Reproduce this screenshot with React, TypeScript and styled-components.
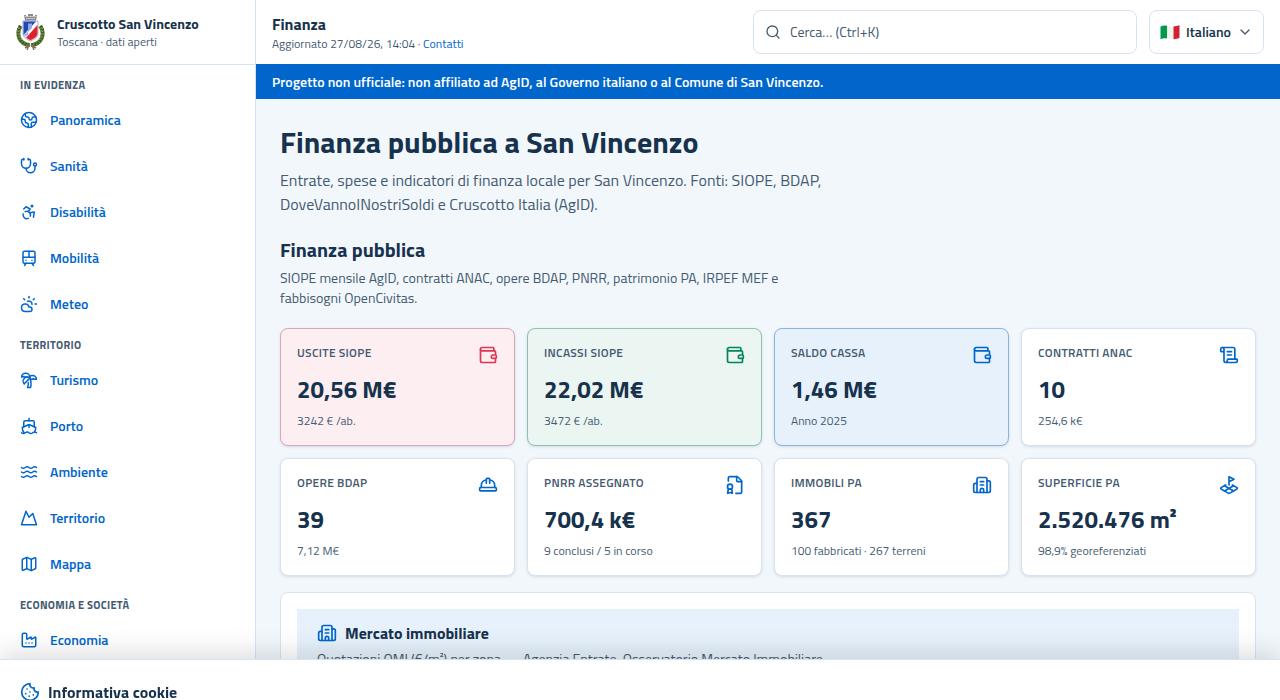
import React from "react";
import styled, { createGlobalStyle } from "styled-components";
import {
  Accessibility,
  Building2,
  ChevronDown,
  CloudSun,
  Cookie,
  Earth,
  Factory,
  FileBadge,
  HardHat,
  LandPlot,
  Map,
  Mountain,
  ScrollText,
  Search,
  Ship,
  Stethoscope,
  TramFront,
  TreePalm,
  Wallet,
  Waves,
  type LucideIcon,
} from "lucide-react";

const color = {
  primary: "#0066cc",
  ink: "#17324d",
  muted: "#455b71",
  line: "#d6e4f2",
  page: "#f2f7fc",
  soft: "#e6f1fb",
};

const GlobalStyle = createGlobalStyle`
  *, *::before, *::after { box-sizing: border-box; }
  html { scrollbar-width: none; }
  body {
    margin: 0;
    background: ${color.page};
    color: ${color.ink};
    font-family: "Titillium Web", Lato, Roboto, "Liberation Sans", sans-serif;
    font-size: 14px;
    line-height: 20px;
  }
  h1, h2, h3, p, ul { margin: 0; padding: 0; }
  a { color: ${color.primary}; text-decoration: none; }
  svg { flex: none; }
`;

const Shell = styled.div`
  display: grid;
  grid-template-columns: 256px minmax(0, 1fr);
  min-height: 100vh;
`;

const Sidebar = styled.aside`
  position: sticky;
  top: 0;
  height: 100vh;
  overflow: hidden;
  background: #fff;
  border-right: 1px solid ${color.line};
`;

const Brand = styled.div`
  display: flex;
  align-items: center;
  gap: 12px;
  height: 65px;
  padding: 0 16px;
  border-bottom: 1px solid ${color.line};
`;

const BrandName = styled.p`
  font-size: 14px;
  font-weight: 700;
  line-height: 20px;
`;

const Small = styled.p`
  font-size: 12px;
  line-height: 16px;
  color: ${color.muted};
`;

const Nav = styled.nav`
  display: flex;
  flex-direction: column;
  gap: 11px;
  padding: 12px 8px;
`;

const NavHeading = styled.h2`
  && { padding: 0 12px; margin-bottom: 4px; }
  font-size: 11px;
  font-weight: 700;
  line-height: 17px;
  letter-spacing: 0.025em;
  text-transform: uppercase;
  color: ${color.muted};
`;

const NavList = styled.ul`
  display: flex;
  flex-direction: column;
  gap: 2px;
  list-style: none;
`;

const NavLink = styled.a`
  display: flex;
  align-items: center;
  gap: 12px;
  height: 44px;
  padding: 0 12px;
  border-radius: 8px;
  font-weight: 600;
`;

const Header = styled.header`
  display: flex;
  align-items: center;
  gap: 12px;
  height: 64px;
  padding: 0 16px;
  background: #fff;
`;

const HeaderText = styled.div`
  flex: 1;
  min-width: 0;
`;

const HeaderTitle = styled.p`
  font-size: 16px;
  font-weight: 700;
  line-height: 24px;
`;

const Field = styled.label`
  display: flex;
  align-items: center;
  height: 44px;
  border: 1px solid ${color.line};
  border-radius: 8px;
  background: #fff;
  color: ${color.muted};
`;

const SearchField = styled(Field)`
  flex: 0 1 384px;
  gap: 9px;
  padding: 0 11px;
`;

const SearchInput = styled.input`
  flex: 1;
  min-width: 0;
  padding: 0;
  border: 0;
  outline: 0;
  background: transparent;
  font: inherit;
  color: ${color.ink};
  &::placeholder {
    color: ${color.muted};
    opacity: 1;
  }
`;

const LanguageField = styled(Field)`
  gap: 6px;
  padding: 0 10px;
`;

const Flag = styled.svg`
  width: 20px;
  height: 16px;
`;

const LanguageSelect = styled.select`
  appearance: none;
  padding: 0;
  border: 0;
  outline: 0;
  background: transparent;
  font: inherit;
  font-weight: 600;
  color: ${color.ink};
`;

const Notice = styled.p`
  && { padding: 8px 16px; }
  background: ${color.primary};
  color: #fff;
  font-weight: 600;
  line-height: 19px;
`;

const Main = styled.main`
  padding: 24px;
`;

const PageTitle = styled.h1`
  font-size: 30px;
  font-weight: 700;
  line-height: 38px;
`;

const Lead = styled.p`
  && { margin-top: 7px; }
  max-width: 672px;
  font-size: 16px;
  line-height: 24px;
  color: ${color.muted};
`;

const SectionHead = styled.div`
  margin: 20px 0;
`;

const SectionTitle = styled.h2`
  font-size: 20px;
  font-weight: 700;
  line-height: 28px;
`;

const SectionText = styled.p`
  && { margin-top: 4px; }
  max-width: 560px;
  color: ${color.muted};
`;

type Tone = "plain" | "red" | "green" | "blue";

const tones: Record<Tone, { bg: string; border: string; icon: string }> = {
  plain: { bg: "#ffffff", border: color.line, icon: color.primary },
  red: { bg: "#fceef1", border: "#dfa3b5", icon: "#de3552" },
  green: { bg: "#ebf5f1", border: "#8ac3ae", icon: "#008758" },
  blue: { bg: "#e6f1fc", border: "#85b5e6", icon: color.primary },
};

const CardGrid = styled.div`
  display: grid;
  grid-template-columns: repeat(4, minmax(0, 1fr));
  gap: 12px;
`;

const Card = styled.article<{ $tone: Tone }>`
  padding: 16px;
  border: 1px solid ${({ $tone }) => tones[$tone].border};
  border-radius: 8px;
  background: ${({ $tone }) => tones[$tone].bg};
  box-shadow: 0 1px 3px rgba(23, 50, 77, 0.14);
`;

const CardTop = styled.div<{ $tone: Tone }>`
  display: flex;
  justify-content: space-between;
  height: 20px;
  color: ${({ $tone }) => tones[$tone].icon};
`;

const CardLabel = styled.h3`
  font-size: 12px;
  font-weight: 600;
  line-height: 16px;
  letter-spacing: 0.025em;
  text-transform: uppercase;
  color: ${color.muted};
`;

const CardValue = styled.p`
  && { margin: 8px 0; }
  font-size: 24px;
  font-weight: 700;
  line-height: 32px;
`;

const Panel = styled.section`
  margin-top: 16px;
  padding: 16px;
  border: 1px solid ${color.line};
  border-radius: 8px;
  background: #fff;
`;

const PanelHead = styled.div`
  padding: 12px 20px;
  background: ${color.soft};
`;

const IconTitle = styled.h2`
  display: flex;
  align-items: center;
  gap: 8px;
  font-size: 16px;
  font-weight: 700;
  line-height: 24px;
  svg { color: ${color.primary}; }
`;

const CookieBar = styled.section`
  position: fixed;
  inset: auto 0 0;
  height: 41px;
  padding: 20px;
  background: #fff;
  border-top: 1px solid ${color.line};
  box-shadow: 0 -8px 24px rgba(0, 0, 0, 0.12);
`;

const navGroups: { title: string; items: [string, LucideIcon][] }[] = [
  {
    title: "In evidenza",
    items: [
      ["Panoramica", Earth],
      ["Sanità", Stethoscope],
      ["Disabilità", Accessibility],
      ["Mobilità", TramFront],
      ["Meteo", CloudSun],
    ],
  },
  {
    title: "Territorio",
    items: [
      ["Turismo", TreePalm],
      ["Porto", Ship],
      ["Ambiente", Waves],
      ["Territorio", Mountain],
      ["Mappa", Map],
    ],
  },
  { title: "Economia e società", items: [["Economia", Factory]] },
];

const cards: { label: string; value: string; note: string; icon: LucideIcon; tone: Tone }[] = [
  { label: "Uscite SIOPE", value: "20,56 M€", note: "3242 € /ab.", icon: Wallet, tone: "red" },
  { label: "Incassi SIOPE", value: "22,02 M€", note: "3472 € /ab.", icon: Wallet, tone: "green" },
  { label: "Saldo cassa", value: "1,46 M€", note: "Anno 2025", icon: Wallet, tone: "blue" },
  { label: "Contratti ANAC", value: "10", note: "254,6 k€", icon: ScrollText, tone: "plain" },
  { label: "Opere BDAP", value: "39", note: "7,12 M€", icon: HardHat, tone: "plain" },
  { label: "PNRR assegnato", value: "700,4 k€", note: "9 conclusi / 5 in corso", icon: FileBadge, tone: "plain" },
  { label: "Immobili PA", value: "367", note: "100 fabbricati · 267 terreni", icon: Building2, tone: "plain" },
  { label: "Superficie PA", value: "2.520.476 m²", note: "98,9% georeferenziati", icon: LandPlot, tone: "plain" },
];

function Crest() {
  return (
    <svg width="29" height="36" viewBox="0 0 29 36" role="img" aria-label="Stemma di San Vincenzo">
      {/* laurel and oak wreath */}
      <path d="M5 12C1.500 16 1.500 23 5 27c3 3 6 4 9 4" fill="none" stroke="#5c7d35" strokeWidth="4" />
      <path d="M24 12c3.500 4 3.500 11 0 15-3 3-6 4-9 4" fill="none" stroke="#5c7d35" strokeWidth="4" />
      <path d="M4 12C1 17 2 23 6 28c2 2 5 3 8 3M25 12c3 5 2 11-2 16-2 2-5 3-8 3" fill="none" stroke="#2f4f1c" strokeWidth="3" strokeDasharray="1 2" />
      <path d="M3 14c-1 5 0 9 3 12M26 14c1 5 0 9-3 12" fill="none" stroke="#a9b56c" strokeWidth="1" strokeDasharray="1 2" />
      {/* ribbon */}
      <path d="M14 31l-5 3M15 31l5 3M13 31l-2 5M16 31l2 5" stroke="#8a6f5c" strokeWidth="1.5" />
      {/* mural crown */}
      <path d="M8 1h2v1h2V0h5v2h2V1h2l-1 5.500H9z" fill="#8b8b8d" />
      <path d="M9 2.500h11M10 4.500h9" stroke="#c8c8ca" strokeWidth="1" />
      {/* shield */}
      <path d="M7 7h15v12c0 4-3 6-7.500 8C10 25 7 23 7 19z" fill="#fff" stroke="#6f7ba0" strokeWidth=".6" />
      <path d="M7.500 7.500H20L7.500 21z" fill="#2447b8" />
      <path d="M12 9.500h4V14l-4 4z" fill="#8fabe4" />
      <path d="M21.500 11v8c0 3.500-3 5.500-7 7.200-1.800-.7-3.200-1.400-4.500-2.400z" fill="#e2202c" />
      <path d="M8 21l4-4v4l-3 2z" fill="#9db5e6" />
    </svg>
  );
}

function ItalianFlag() {
  return (
    <Flag viewBox="0 0 20 16" aria-hidden="true">
      <path d="M.5 2.500C2.500 1.400 4.800 1.200 7 1.700V14.500C4.800 14 2.500 14.200.5 15.200z" fill="#009a49" />
      <path d="M7 1.700c2 .5 4 1 6.500.8v12.700c-2.500.2-4.500-.2-6.500-.7z" fill="#f1f1f1" />
      <path d="M13.500 2.500C15.500 2.400 17.500 2 19.500 1v12.800c-2 1-4 1.400-6 1.400z" fill="#d0222f" />
    </Flag>
  );
}

export default function App() {
  return (
    <>
      <GlobalStyle />
      <Shell>
        <Sidebar>
          <Brand>
            <Crest />
            <div>
              <BrandName>Cruscotto San Vincenzo</BrandName>
              <Small>Toscana · dati aperti</Small>
            </div>
          </Brand>
          <Nav aria-label="Sezioni">
            {navGroups.map((group) => (
              <div key={group.title}>
                <NavHeading>{group.title}</NavHeading>
                <NavList>
                  {group.items.map(([label, Icon]) => (
                    <li key={label}>
                      <NavLink href="#">
                        <Icon size={18} />
                        {label}
                      </NavLink>
                    </li>
                  ))}
                </NavList>
              </div>
            ))}
          </Nav>
        </Sidebar>
        <div>
          <Header>
            <HeaderText>
              <HeaderTitle>Finanza</HeaderTitle>
              <Small>
                Aggiornato 27/08/26, 14:04 · <a href="#contatti">Contatti</a>
              </Small>
            </HeaderText>
            <SearchField>
              <Search size={16} />
              <SearchInput type="search" placeholder="Cerca… (Ctrl+K)" aria-label="Cerca" />
            </SearchField>
            <LanguageField>
              <ItalianFlag />
              <LanguageSelect aria-label="Lingua" defaultValue="it">
                <option value="it">Italiano</option>
              </LanguageSelect>
              <ChevronDown size={16} />
            </LanguageField>
          </Header>
          <Notice>
            Progetto non ufficiale: non affiliato ad AgID, al Governo italiano o al Comune di San Vincenzo.
          </Notice>
          <Main>
            <PageTitle>Finanza pubblica a San Vincenzo</PageTitle>
            <Lead>
              Entrate, spese e indicatori di finanza locale per San Vincenzo. Fonti: SIOPE, BDAP,
              DoveVannoINostriSoldi e Cruscotto Italia (AgID).
            </Lead>
            <SectionHead>
              <SectionTitle>Finanza pubblica</SectionTitle>
              <SectionText>
                SIOPE mensile AgID, contratti ANAC, opere BDAP, PNRR, patrimonio PA, IRPEF MEF e
                fabbisogni OpenCivitas.
              </SectionText>
            </SectionHead>
            <CardGrid>
              {cards.map(({ label, value, note, icon: Icon, tone }) => (
                <Card key={label} $tone={tone}>
                  <CardTop $tone={tone}>
                    <CardLabel>{label}</CardLabel>
                    <Icon size={20} />
                  </CardTop>
                  <CardValue>{value}</CardValue>
                  <Small>{note}</Small>
                </Card>
              ))}
            </CardGrid>
            <Panel>
              <PanelHead>
                <IconTitle>
                  <Building2 size={20} />
                  Mercato immobiliare
                </IconTitle>
                <SectionText>
                  Quotazioni OMI (€/m²) per zona — Agenzia Entrate, Osservatorio Mercato Immobiliare
                </SectionText>
              </PanelHead>
            </Panel>
          </Main>
        </div>
      </Shell>
      <CookieBar aria-label="Cookie">
        <IconTitle>
          <Cookie size={20} />
          Informativa cookie
        </IconTitle>
      </CookieBar>
    </>
  );
}
